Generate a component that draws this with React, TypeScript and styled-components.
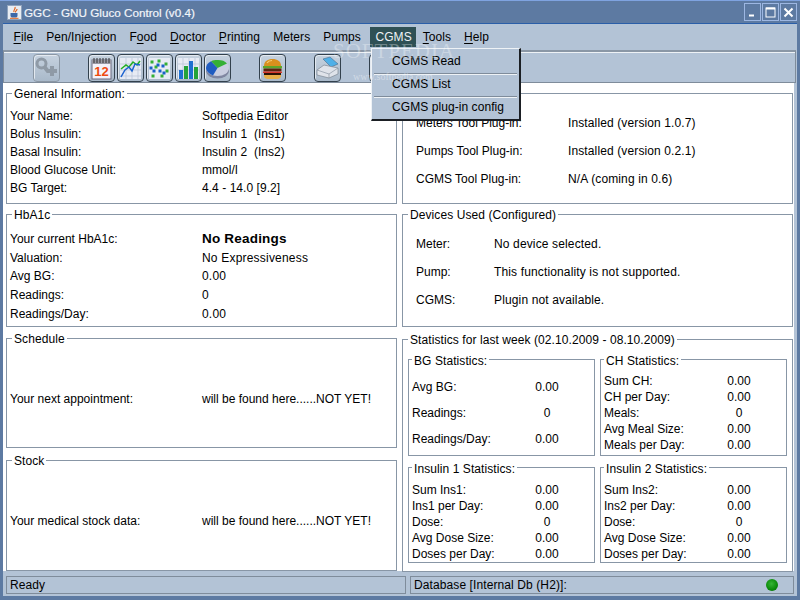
import { Fragment } from 'react';
import styled, { createGlobalStyle } from 'styled-components';

const GlobalStyle = createGlobalStyle`
    html, body {
        margin: 0;
        padding: 0;
        background: #5b78a3;
    }
    body {
        font-family: "Liberation Sans", Arial, sans-serif;
        font-size: 12px;
        color: #000;
    }
`;

const Frame = styled.div`
    position: relative;
    width: 800px;
    height: 600px;
    overflow: hidden;
    box-sizing: border-box;
    background: #5d7aa2;
    border-top: 1px solid #7fa3e0;
    display: flex;
    flex-direction: column;
`;

const TitleBar = styled.div`
    height: 22px;
    display: flex;
    align-items: center;
    padding: 0 3px 0 7px;
    gap: 2px;
    color: #f2f5fa;
    font-size: 11.7px;
`;

const TitleText = styled.span`
    flex: 1;
    -webkit-text-stroke: 0.2px #f2f5fa;
`;

const WindowButtons = styled.div`
    display: flex;
    gap: 1px;
`;

const WindowButton = styled.div`
    width: 15px;
    height: 16px;
    border: 1px solid #9db7e2;
    display: flex;
    align-items: center;
    justify-content: center;
`;

const Client = styled.div`
    flex: 1;
    margin: 0 3px 4px;
    background: #b3c3d6;
    border-top: 1px solid #2a5ea8;
    display: flex;
    flex-direction: column;
`;

const MenuBar = styled.div`
    height: 26px;
    display: flex;
    align-items: flex-start;
    padding: 3px 0 0 4px;
    box-sizing: border-box;
`;

const MenuItem = styled.div<{ $open?: boolean }>`
    height: 20px;
    line-height: 20px;
    margin-left: ${p => (p.$open ? 3 : 0)}px;
    padding: 0 ${p => (p.$open ? 4.5 : 6.5)}px 0 ${p => (p.$open ? 5 : 6.5)}px;
    letter-spacing: 0.07px;
    white-space: nowrap;
    background: ${p => (p.$open ? '#2f5055' : 'transparent')};
    color: ${p => (p.$open ? '#eef2f6' : '#000')};
    u {
        text-underline-offset: 2px;
    }
`;

const Toolbar = styled.div`
    height: 33px;
    box-sizing: border-box;
    margin-right: 1px;
    padding: 2px 0 0 29px;
    display: flex;
    gap: 28px;
    border: 1px solid #7f8c9b;
    border-top: 2px solid #8a97a6;
    box-shadow: inset 0 1px 0 #eef2f6;
`;

const ToolGroup = styled.div`
    display: flex;
    gap: 2px;
`;

const ToolButton = styled.div<{ $disabled?: boolean }>`
    width: 27px;
    height: 28px;
    box-sizing: border-box;
    border: 1px solid ${p => (p.$disabled ? '#8b97a4' : '#33414d')};
    border-radius: 4px;
    background: linear-gradient(#c6d2df, #a9b9ca);
    box-shadow: inset 1px 1px 0 #e3e9f0;
    display: flex;
    align-items: center;
    justify-content: center;
`;

const Main = styled.div`
    height: 488px;
    box-sizing: border-box;
    margin-right: 3px;
    padding: 3px 1px 0 3px;
    background: #fff;
    display: grid;
    grid-template-columns: 391px 391px;
    column-gap: 5px;
`;

const LeftColumn = styled.div`
    display: grid;
    grid-template-rows: 121px 124px 122px 118px;
    align-items: start;
`;

const RightColumn = styled.div`
    display: grid;
    grid-template-rows: 121px 125px 240px;
    align-items: start;
`;

const Panel = styled.fieldset<{ $h: number }>`
    margin: 0;
    padding: 0;
    min-width: 0;
    box-sizing: border-box;
    height: ${p => p.$h}px;
    border: 1px solid #8896a6;
`;

const Legend = styled.legend`
    margin-left: 5px;
    padding: 0 2px;
    height: 14px;
    line-height: 16px;
    letter-spacing: 0.08px;
`;

const SubLegend = styled(Legend)`
    margin-left: 3px;
    line-height: 18px;
`;

const Rows = styled.div<{ $col: number; $row: number; $top: number; $left: number; $spread?: number }>`
    display: grid;
    grid-template-columns: ${p => p.$col}px 1fr;
    grid-auto-rows: ${p => p.$row}px;
    padding: ${p => p.$top}px 0 0 ${p => p.$left}px;
    align-items: center;
    white-space: pre;
    > span:nth-child(even) {
        letter-spacing: ${p => p.$spread ?? 0}px;
    }
`;

const StatRows = styled.div<{ $row: number; $top: number }>`
    display: grid;
    grid-template-columns: 100px 70px;
    grid-auto-rows: ${p => p.$row}px;
    padding: ${p => p.$top}px 0 0 3px;
    align-items: center;
    white-space: nowrap;
`;

const StatValue = styled.span`
    text-align: center;
`;

const BigValue = styled.span`
    font-size: 13.5px;
    font-weight: 700;
    && {
        letter-spacing: 0.5px;
    }
`;

const StatGrid = styled.div`
    display: grid;
    grid-template-columns: 187px 187px;
    grid-template-rows: 104px 103px;
    column-gap: 5px;
    row-gap: 4px;
    padding: 6px 0 0 5px;
`;

const StatusBar = styled.div`
    margin: 5px 3px 0 3px;
    height: 18px;
    display: grid;
    grid-template-columns: 400px 384px;
    column-gap: 4px;
`;

const StatusCell = styled.div`
    box-sizing: border-box;
    border: 1px solid #7f8c9b;
    padding: 0 3px;
    display: flex;
    align-items: center;
    justify-content: space-between;
    letter-spacing: 0.1px;
`;

const Led = styled.div`
    width: 12px;
    height: 12px;
    margin-right: 12px;
    border-radius: 50%;
    background: radial-gradient(circle at 45% 40%, #35b535, #0a8a0a 60%, #0a5c0a);
`;

const Popup = styled.div`
    position: absolute;
    left: 371px;
    top: 47px;
    width: 150px;
    box-sizing: border-box;
    background: #b3c3d6;
    border: 1px solid #eef2f6;
    border-right: 2px solid #1b1f24;
    border-bottom: 2px solid #1b1f24;
    padding: 1px 1px 0;
`;

const PopupItem = styled.div`
    height: 23px;
    line-height: 23px;
    padding-left: 19px;
    letter-spacing: 0.07px;
`;

const PopupSeparator = styled.div`
    height: 1px;
    background: #7f8c9b;
    border-bottom: 1px solid #eef2f6;
    margin: 0 1px -2px;
`;

const Watermark = styled.div`
    position: absolute;
    left: 333px;
    top: 38px;
    font-family: "Liberation Serif", serif;
    font-size: 21px;
    letter-spacing: 1px;
    color: rgba(255, 255, 255, 0.32);
    pointer-events: none;
`;

const WatermarkUrl = styled.div`
    position: absolute;
    left: 353px;
    top: 70px;
    font-family: "Liberation Serif", serif;
    font-size: 10px;
    color: rgba(255, 255, 255, 0.4);
    pointer-events: none;
`;

function JavaIcon() {
    return (
        <svg width="15" height="15" viewBox="0 0 15 15">
            <rect x="0.5" y="0.5" width="14" height="14" fill="#e8ecf2" stroke="#8fa3bd" />
            <path d="M8 2c1 2-2 3-1 5M10 4c0 2-2 2-1.500 3.500" stroke="#e2641c" strokeWidth="1.200" fill="none" />
            <path d="M3.500 8h7v2.500c0 1.500-1 2-2 2h-3c-1 0-2-.5-2-2z" fill="#3d68a8" />
            <path d="M3 13.300h8.500" stroke="#e2641c" strokeWidth="1" />
        </svg>
    );
}

function PluginIcon() {
    return (
        <svg width="25" height="25" viewBox="0 0 25 25">
            <circle cx="7.500" cy="7.500" r="4.500" fill="none" stroke="#8f9aa6" strokeWidth="3" />
            <path d="M10.500 11l4 5" stroke="#8f9aa6" strokeWidth="4" />
            <path d="M16 10h4v3h3v4h-3v3h-4v-3h-3v-4h3z" fill="#8f9aa6" />
        </svg>
    );
}

function CalendarIcon() {
    return (
        <svg width="25" height="25" viewBox="0 0 25 25">
            <rect x="3" y="4" width="19" height="19" fill="#f4f2fa" stroke="#6a6a80" />
            <rect x="3" y="4" width="19" height="4" fill="#9a9aa5" />
            <path d="M5 2v5M8 2v5M11 2v5M14 2v5M17 2v5M20 2v5" stroke="#333" strokeWidth="1" />
            <text x="12.500" y="20" textAnchor="middle" fontFamily="Liberation Sans, sans-serif" fontSize="13" fontWeight="700" fill="#ee4a10">12</text>
        </svg>
    );
}

function LineChartIcon() {
    return (
        <svg width="25" height="25" viewBox="0 0 25 25">
            <rect x="2" y="2" width="21" height="21" fill="#e7ebf4" />
            <path d="M2 8h21M2 14h21M2 20h21M8 2v21M14 2v21M20 2v21" stroke="#b8c2d6" strokeWidth="0.700" />
            <path d="M3 13l5-4 3 2 4-5 4 3 3-4" fill="none" stroke="#22b022" strokeWidth="1.500" />
            <path d="M3 21l4-7 4-3 3 4 3-7 5 1" fill="none" stroke="#1a62d0" strokeWidth="1.500" />
        </svg>
    );
}

function ScatterIcon() {
    const green = [[5, 6], [12, 5], [19, 8], [9, 11], [20, 15], [6, 20], [15, 20]];
    const blue = [[4, 12], [11, 9], [16, 10], [13, 15], [7, 15], [17, 17]];
    return (
        <svg width="25" height="25" viewBox="0 0 25 25">
            <rect x="2" y="2" width="21" height="21" fill="#e7ebf4" />
            {green.map(([x, y]) => <rect key={`g${x}-${y}`} x={x - 1.5} y={y - 1.5} width="3" height="3" fill="#34b034" />)}
            {blue.map(([x, y]) => <rect key={`b${x}-${y}`} x={x - 1.5} y={y - 1.5} width="3" height="3" fill="#1a62c8" />)}
        </svg>
    );
}

function BarsIcon() {
    return (
        <svg width="25" height="25" viewBox="0 0 25 25">
            <rect x="2" y="2" width="21" height="21" fill="#e7ebf4" />
            <path d="M2 8h21M2 14h21M7 2v21M13 2v21M19 2v21" stroke="#b8c2d6" strokeWidth="0.700" />
            <rect x="3" y="14" width="4" height="9" fill="#1e70d0" />
            <rect x="8" y="10" width="4" height="13" fill="#24a33a" />
            <rect x="13" y="5" width="4" height="18" fill="#1e70d0" />
            <rect x="18" y="11" width="4" height="12" fill="#24a33a" />
        </svg>
    );
}

function PieIcon() {
    return (
        <svg width="25" height="25" viewBox="0 0 25 25">
            <ellipse cx="12.500" cy="14.500" rx="11.500" ry="8" fill="#7f86a0" />
            <ellipse cx="12.500" cy="12" rx="11.500" ry="8" fill="#c9cee0" />
            <path d="M12.500 12L6 5.200C9 3.800 11 4 13 4c4 0 7 1 9 3.500z" fill="#35b035" />
            <path d="M12.500 12L6 5.200C2.500 6.800 1 9.500 1 12c0 3 3 6 7 7.500z" fill="#1f5cc0" />
        </svg>
    );
}

function BurgerIcon() {
    return (
        <svg width="25" height="25" viewBox="0 0 25 25">
            <path d="M4 10c0-5 4-7 8.500-7S21 5 21 10z" fill="#d8901e" />
            <path d="M7 7c1-1.500 3-2.500 5-2.500" stroke="#f4cf78" strokeWidth="1.200" fill="none" />
            <rect x="3" y="10" width="19" height="2.500" fill="#5fa52a" />
            <rect x="3.500" y="12.500" width="18" height="3" rx="1" fill="#5a240e" />
            <rect x="3" y="15.500" width="19" height="1.500" fill="#d8382a" />
            <rect x="4" y="17" width="17" height="2" fill="#2e1406" />
            <path d="M4 19h17v1c0 2-2 3-4 3H8c-2 0-4-1-4-3z" fill="#e8b048" />
        </svg>
    );
}

function PrinterIcon() {
    return (
        <svg width="25" height="25" viewBox="0 0 25 25">
            <path d="M8 3l7-2 8 7-7 3z" fill="#4fb0e8" stroke="#4a6a88" strokeWidth="0.600" />
            <path d="M2 14l7-5 14 3v6l-9 4-12-3z" fill="#dfe3ea" stroke="#7c8694" strokeWidth="0.700" />
            <path d="M2 14l12 4 9-6M14 18v4" fill="none" stroke="#8d97a5" strokeWidth="0.700" />
        </svg>
    );
}

const general = [
    ['Your Name:', 'Softpedia Editor'],
    ['Bolus Insulin:', 'Insulin 1  (Ins1)'],
    ['Basal Insulin:', 'Insulin 2  (Ins2)'],
    ['Blood Glucose Unit:', 'mmol/l'],
    ['BG Target:', '4.4 - 14.0 [9.2]'],
];

const plugins = [
    ['Meters Tool Plug-in:', 'Installed (version 1.0.7)'],
    ['Pumps Tool Plug-in:', 'Installed (version 0.2.1)'],
    ['CGMS Tool Plug-in:', 'N/A (coming in 0.6)'],
];

const devices = [
    ['Meter:', 'No device selected.'],
    ['Pump:', 'This functionality is not supported.'],
    ['CGMS:', 'Plugin not available.'],
];

const bgStats = [['Avg BG:', '0.00'], ['Readings:', '0'], ['Readings/Day:', '0.00']];
const chStats = [
    ['Sum CH:', '0.00'],
    ['CH per Day:', '0.00'],
    ['Meals:', '0'],
    ['Avg Meal Size:', '0.00'],
    ['Meals per Day:', '0.00'],
];
const ins1Stats = [
    ['Sum Ins1:', '0.00'],
    ['Ins1 per Day:', '0.00'],
    ['Dose:', '0'],
    ['Avg Dose Size:', '0.00'],
    ['Doses per Day:', '0.00'],
];
const ins2Stats = [
    ['Sum Ins2:', '0.00'],
    ['Ins2 per Day:', '0.00'],
    ['Dose:', '0'],
    ['Avg Dose Size:', '0.00'],
    ['Doses per Day:', '0.00'],
];

function InfoRows({ rows }: { rows: string[][] }) {
    return (
        <>
            {rows.map(([label, value]) => (
                <Fragment key={label}>
                    <span>{label}</span>
                    <span>{value}</span>
                </Fragment>
            ))}
        </>
    );
}

function StatPanel({ title, rows, row, top, h }: { title: string; rows: string[][]; row: number; top: number; h: number }) {
    return (
        <Panel $h={h}>
            <SubLegend>{title}</SubLegend>
            <StatRows $row={row} $top={top}>
                {rows.map(([label, value]) => (
                    <Fragment key={label}>
                        <span>{label}</span>
                        <StatValue>{value}</StatValue>
                    </Fragment>
                ))}
            </StatRows>
        </Panel>
    );
}

function App() {
    return (
        <>
            <GlobalStyle />
            <Frame>
                <TitleBar>
                    <JavaIcon />
                    <TitleText>GGC - GNU Gluco Control (v0.4)</TitleText>
                    <WindowButtons>
                        <WindowButton>
                            <svg width="9" height="9" viewBox="0 0 9 9"><path d="M1 7.500h5" stroke="#fff" strokeWidth="2" /></svg>
                        </WindowButton>
                        <WindowButton>
                            <svg width="11" height="11" viewBox="0 0 11 11"><rect x="1" y="1" width="9" height="9" fill="none" stroke="#fff" /><path d="M1 1.500h9" stroke="#fff" strokeWidth="2" /></svg>
                        </WindowButton>
                        <WindowButton>
                            <svg width="11" height="11" viewBox="0 0 11 11"><path d="M1.500 1.500l8 8M9.500 1.500l-8 8" stroke="#fff" strokeWidth="2" /></svg>
                        </WindowButton>
                    </WindowButtons>
                </TitleBar>
                <Client>
                    <MenuBar>
                        <MenuItem><u>F</u>ile</MenuItem>
                        <MenuItem>Pen/Injection</MenuItem>
                        <MenuItem>F<u>o</u>od</MenuItem>
                        <MenuItem><u>D</u>octor</MenuItem>
                        <MenuItem><u>P</u>rinting</MenuItem>
                        <MenuItem>Meters</MenuItem>
                        <MenuItem>Pumps</MenuItem>
                        <MenuItem $open>CGMS</MenuItem>
                        <MenuItem><u>T</u>ools</MenuItem>
                        <MenuItem><u>H</u>elp</MenuItem>
                    </MenuBar>
                    <Toolbar>
                        <ToolButton $disabled><PluginIcon /></ToolButton>
                        <ToolGroup>
                            <ToolButton><CalendarIcon /></ToolButton>
                            <ToolButton><LineChartIcon /></ToolButton>
                            <ToolButton><ScatterIcon /></ToolButton>
                            <ToolButton><BarsIcon /></ToolButton>
                            <ToolButton><PieIcon /></ToolButton>
                        </ToolGroup>
                        <ToolButton><BurgerIcon /></ToolButton>
                        <ToolButton><PrinterIcon /></ToolButton>
                        <ToolButton />
                    </Toolbar>
                    <Main>
                        <LeftColumn>
                            <Panel $h={118}>
                                <Legend>General Information:</Legend>
                                <Rows $col={192} $row={18} $top={7} $left={3} $spread={0.05}>
                                    <InfoRows rows={general} />
                                </Rows>
                            </Panel>
                            <Panel $h={120}>
                                <Legend>HbA1c</Legend>
                                <Rows $col={192} $row={18.75} $top={8.5} $left={3} $spread={0.2}>
                                    <span>Your current HbA1c:</span>
                                    <BigValue>No Readings</BigValue>
                                    <span>Valuation:</span>
                                    <span>No Expressiveness</span>
                                    <span>Avg BG:</span>
                                    <span>0.00</span>
                                    <span>Readings:</span>
                                    <span>0</span>
                                    <span>Readings/Day:</span>
                                    <span>0.00</span>
                                </Rows>
                            </Panel>
                            <Panel $h={117}>
                                <Legend>Schedule</Legend>
                                <Rows $col={192} $row={18} $top={45} $left={3}>
                                    <span>Your next appointment:</span>
                                    <span>will be found here......NOT YET!</span>
                                </Rows>
                            </Panel>
                            <Panel $h={118}>
                                <Legend>Stock</Legend>
                                <Rows $col={192} $row={18} $top={45} $left={3}>
                                    <span>Your medical stock data:</span>
                                    <span>will be found here......NOT YET!</span>
                                </Rows>
                            </Panel>
                        </LeftColumn>
                        <RightColumn>
                            <Panel $h={118}>
                                <Legend />
                                <Rows $col={152} $row={28} $top={9} $left={13} $spread={0.12}>
                                    <InfoRows rows={plugins} />
                                </Rows>
                            </Panel>
                            <Panel $h={120}>
                                <Legend>Devices Used (Configured)</Legend>
                                <Rows $col={78} $row={28} $top={9} $left={13} $spread={0.14}>
                                    <InfoRows rows={devices} />
                                </Rows>
                            </Panel>
                            <Panel $h={240}>
                                <Legend>Statistics for last week (02.10.2009 - 08.10.2009)</Legend>
                                <StatGrid>
                                    <StatPanel title="BG Statistics:" rows={bgStats} row={26} top={8} h={104} />
                                    <StatPanel title="CH Statistics:" rows={chStats} row={16} top={7} h={104} />
                                    <StatPanel title="Insulin 1 Statistics:" rows={ins1Stats} row={16} top={8} h={103} />
                                    <StatPanel title="Insulin 2 Statistics:" rows={ins2Stats} row={16} top={8} h={103} />
                                </StatGrid>
                            </Panel>
                        </RightColumn>
                    </Main>
                    <StatusBar>
                        <StatusCell>Ready</StatusCell>
                        <StatusCell>
                            Database [Internal Db (H2)]:
                            <Led />
                        </StatusCell>
                    </StatusBar>
                </Client>
                <Popup>
                    <PopupItem>CGMS Read</PopupItem>
                    <PopupSeparator />
                    <PopupItem>CGMS List</PopupItem>
                    <PopupSeparator />
                    <PopupItem>CGMS plug-in config</PopupItem>
                </Popup>
                <Watermark>SOFTPEDIA</Watermark>
                <WatermarkUrl>www.softpedia.com</WatermarkUrl>
            </Frame>
        </>
    );
}

export default App;
